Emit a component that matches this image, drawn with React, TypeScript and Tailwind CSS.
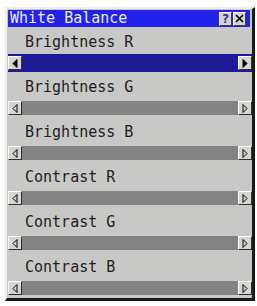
const rows = ["Brightness R", "Brightness G", "Brightness B", "Contrast R", "Contrast G", "Contrast B"];

function Arrow({ dir, filled }: { dir: "left" | "right"; filled: boolean }) {
  const pts = dir === "left" ? "5,0.5 5,8.5 1,4.5" : "1,0.5 1,8.5 5,4.5";
  return (
    <svg width="6" height="9" viewBox="0 0 6 9">
      <polygon points={pts} fill={filled ? "#000" : "none"} stroke="#000" strokeWidth="1" />
    </svg>
  );
}

function ArrowButton({ dir, filled }: { dir: "left" | "right"; filled: boolean }) {
  return (
    <div className="w-[14px] h-[14px] shrink-0 flex items-center justify-center bg-[#d6d6d0] border-t border-l border-t-white border-l-white border-r border-b border-r-[#303030] border-b-[#303030]">
      <Arrow dir={dir} filled={filled} />
    </div>
  );
}

function Slider({ selected }: { selected: boolean }) {
  return (
    <div className={selected ? "h-[18px] flex items-center bg-[#1c1c98]" : "h-[18px] flex items-center"}>
      <ArrowButton dir="left" filled={selected} />
      <div className={selected ? "flex-1 h-[14px]" : "flex-1 h-[14px] bg-[#838383]"} />
      <ArrowButton dir="right" filled={selected} />
    </div>
  );
}

export default function App() {
  return (
    <div className="w-[257px] h-[306px] bg-white pt-[7px] pl-[5px]" style={{ fontFamily: '"DejaVu Sans Mono", monospace' }}>
      <div className="w-[250px] bg-[#c8c8c6] border-t-2 border-l-2 border-t-[#eeeeee] border-l-[#eeeeee] border-r-[3px] border-b-[3px] border-r-[#1a1a1a] border-b-[#1a1a1a] p-[1px] pr-0 pb-[1px]">
        {/* Title bar */}
        <div className="h-[17px] flex items-center bg-[#2222ea] mr-[2px]">
          <span className="pl-[2px] text-[15px] leading-none text-[#eeeeff] font-light">White Balance</span>
          <div className="ml-auto flex gap-[1px] mr-[4px]">
            <div className="w-[13px] h-[14px] flex items-center justify-center bg-[#d4d4d0] border-t border-l border-t-white border-l-white border-r border-b border-r-[#404040] border-b-[#404040] text-[13px] leading-none font-bold text-[#1c1cc8]">?</div>
            <div className="w-[13px] h-[14px] flex items-center justify-center bg-[#d4d4d0] border-t border-l border-t-white border-l-white border-r border-b border-r-[#404040] border-b-[#404040]">
              <svg width="9" height="9" viewBox="0 0 9 9">
                <path d="M1 1 L8 8 M8 1 L1 8" stroke="#000" strokeWidth="1.6" />
              </svg>
            </div>
          </div>
        </div>
        <div>
          {rows.map((label, i) => (
            <div key={label}>
              <div className="h-[27px] flex items-center pt-[3px] pl-[17px] text-[15px] leading-none text-[#1e1e1e]">{label}</div>
              <Slider selected={i === 0} />
            </div>
          ))}
        </div>
      </div>
    </div>
  );
}
